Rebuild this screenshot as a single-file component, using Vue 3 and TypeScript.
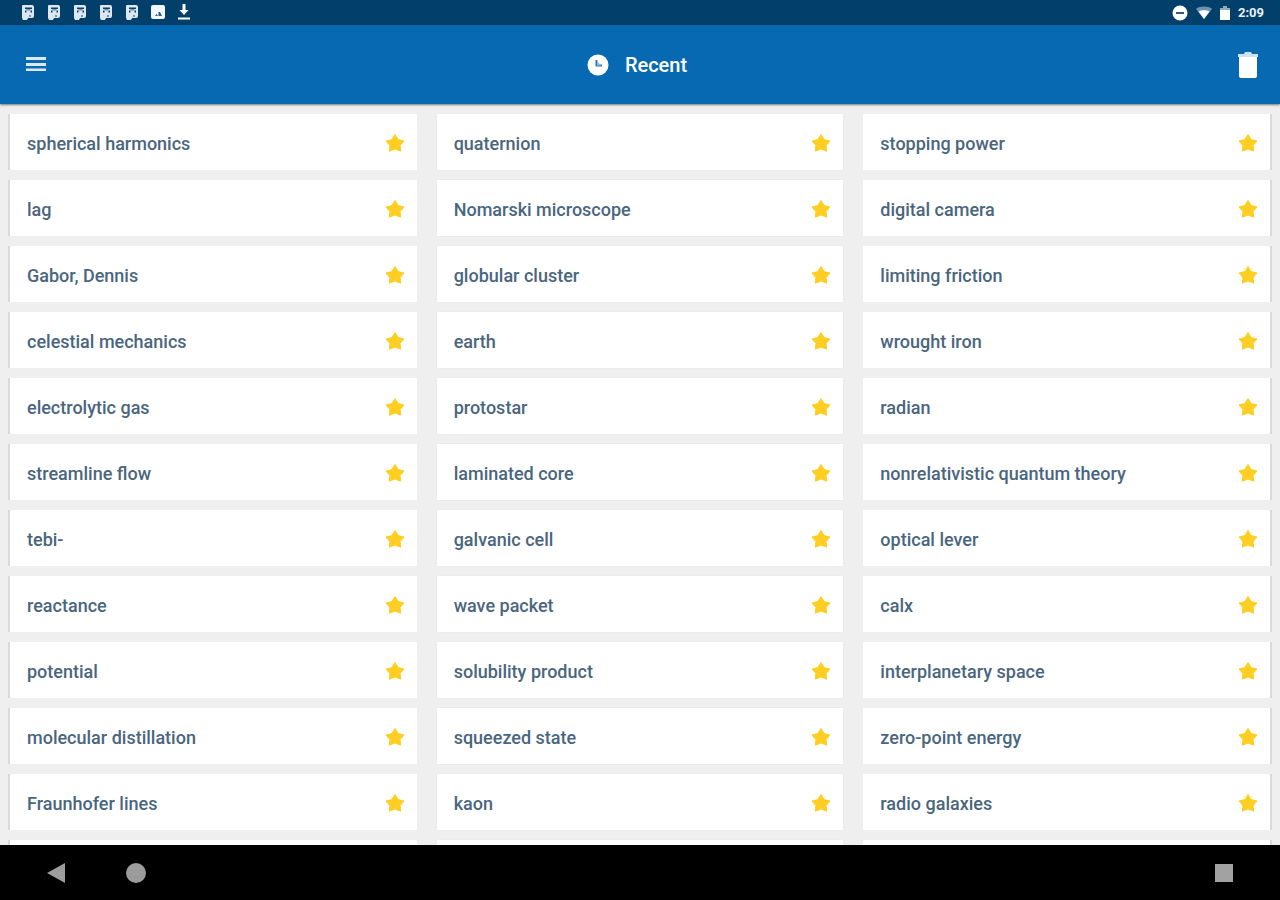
<script setup lang="ts">
import { ref } from 'vue'

interface Term {
  name: string
  starred: boolean
}

const names: string[] = [
  'spherical harmonics', 'quaternion', 'stopping power',
  'lag', 'Nomarski microscope', 'digital camera',
  'Gabor, Dennis', 'globular cluster', 'limiting friction',
  'celestial mechanics', 'earth', 'wrought iron',
  'electrolytic gas', 'protostar', 'radian',
  'streamline flow', 'laminated core', 'nonrelativistic quantum theory',
  'tebi-', 'galvanic cell', 'optical lever',
  'reactance', 'wave packet', 'calx',
  'potential', 'solubility product', 'interplanetary space',
  'molecular distillation', 'squeezed state', 'zero-point energy',
  'Fraunhofer lines', 'kaon', 'radio galaxies',
]

const terms = ref<Term[]>(names.map((name) => ({ name, starred: true })))
</script>

<template>
  <div class="screen">
    <div class="status">
      <div class="notices">
        <svg v-for="n in 5" :key="n" width="16" height="18" viewBox="0 0 16 18" aria-hidden="true">
          <path d="M3 1h9a2 2 0 0 1 2 2v9a2 2 0 0 1-2 2H8l-1 2H3l-1-2V2a1 1 0 0 1 1-1z" fill="#dbe7f1" />
          <path d="M5 3.500h7v1.500H5zM5 6.500h1.500v2H5zM10.500 6.500H12v2h-1.500zM9 11.500h2v1H9z" fill="#0d4068" />
          <path d="M6.500 5h4v1.500h-4z" fill="#6f8fab" />
        </svg>
        <svg width="16" height="18" viewBox="0 0 16 18" aria-hidden="true">
          <rect x="1" y="1" width="14" height="14" rx="2" fill="#f2f7fb" />
          <path d="M5 12l1.500-2L8 12zM8.500 12V8H10l2 4z" fill="#33597c" />
        </svg>
        <svg width="16" height="18" viewBox="0 0 16 18" aria-hidden="true">
          <path d="M6.500 0h3v6h3L8 11 3.500 6h3zM2 13.500h12v2H2z" fill="#fff" />
        </svg>
      </div>
      <div class="system">
        <svg width="16" height="16" viewBox="0 0 16 16" aria-hidden="true">
          <circle cx="8" cy="8" r="7.500" fill="#fff" />
          <rect x="4" y="7" width="8" height="2" fill="#33597c" />
        </svg>
        <svg width="16" height="16" viewBox="0 0 16 16" aria-hidden="true">
          <path d="M0 4C4 .8 12 .8 16 4L8 14z" fill="#6e91ae" />
          <path d="M2.500 6.500c3-1.800 8-1.800 11 0L8 14z" fill="#fff" />
        </svg>
        <svg width="10" height="16" viewBox="0 0 10 16" aria-hidden="true">
          <path d="M3 1h4v2h3v12H0V3h3z" fill="#8fabc0" />
          <path d="M0 5h10v10H0z" fill="#fff" />
        </svg>
        <span class="time">2:09</span>
      </div>
    </div>

    <header class="bar">
      <button class="tool" type="button" aria-label="Menu">
        <svg width="20" height="18" viewBox="0 0 20 18">
          <path d="M0 1h20v3H0zM0 7h20v3H0zM0 12.500h20v2.500H0z" fill="#dce8f8" />
        </svg>
      </button>
      <h1 class="title">
        <svg width="22" height="22" viewBox="0 0 22 22" aria-hidden="true">
          <circle cx="11" cy="11" r="10.500" fill="#fff" />
          <path d="M9.500 6v5.500H15" fill="none" stroke="#2a78b8" stroke-width="2" />
          <path d="M10 7l4 4.500h-4z" fill="#8db8dc" />
        </svg>
        <span>Recent</span>
      </h1>
      <button class="tool" type="button" aria-label="Delete all">
        <svg width="20" height="26" viewBox="0 0 20 26">
          <path d="M0 2h6l1-2h6l1 2h6v3H0z" fill="#cfe1f3" />
          <path d="M1 5h18v19a2 2 0 0 1-2 2H3a2 2 0 0 1-2-2z" fill="#fff" />
        </svg>
      </button>
    </header>

    <main class="content">
      <ul class="grid">
        <li v-for="term in terms" :key="term.name" class="card">
          <span class="name">{{ term.name }}</span>
          <button
            class="star"
            type="button"
            :aria-label="'Favourite ' + term.name"
            :aria-pressed="term.starred"
            @click="term.starred = !term.starred"
          >
            <svg width="20" height="20" viewBox="0 0 20 20">
              <path
                d="M10 1.500l3.200 5.100 5.800 1.400-3.900 4.600.6 5.600L10 16l-5.700 2.200.6-5.600L1 8l5.800-1.400z"
                :fill="term.starred ? '#ffce22' : '#d0d4d8'"
                :stroke="term.starred ? '#ffce22' : '#d0d4d8'"
                stroke-width="1"
                stroke-linejoin="round"
              />
            </svg>
          </button>
        </li>
        <li v-for="n in 3" :key="'next' + n" class="card" aria-hidden="true"></li>
      </ul>
    </main>

    <nav class="nav" aria-label="System">
      <button type="button" aria-label="Back">
        <svg width="20" height="20" viewBox="0 0 20 20"><path d="M1 10L19 0v20z" fill="#9c9c9c" /></svg>
      </button>
      <button type="button" aria-label="Home">
        <svg width="20" height="20" viewBox="0 0 20 20"><circle cx="10" cy="10" r="10" fill="#9c9c9c" /></svg>
      </button>
      <button class="last" type="button" aria-label="Overview">
        <svg width="20" height="20" viewBox="0 0 20 20"><rect x="1" y="1" width="18" height="18" fill="#a2a2a2" /></svg>
      </button>
    </nav>
  </div>
</template>

<style>
body {
  margin: 0;
}
</style>

<style scoped>
.screen {
  display: flex;
  flex-direction: column;
  height: 100vh;
  overflow: hidden;
  background: #efefef;
  font-family: Roboto, "Liberation Sans", sans-serif;
}
button {
  display: flex;
  align-items: center;
  justify-content: center;
  padding: 0;
  border: 0;
  background: none;
  cursor: pointer;
}
svg {
  display: block;
}
.status {
  flex: none;
  display: flex;
  align-items: center;
  justify-content: space-between;
  height: 25px;
  padding: 0 16px 0 20px;
  background: #033f6b;
}
.notices {
  display: flex;
  gap: 10px;
  padding-top: 1px;
}
.system {
  display: flex;
  align-items: center;
  gap: 8px;
}
.time {
  color: #e8f0f6;
  font-size: 13px;
  font-weight: 700;
  line-height: 16px;
}
.bar {
  flex: none;
  position: relative;
  z-index: 1;
  display: flex;
  align-items: center;
  justify-content: space-between;
  height: 79px;
  padding: 0 16px 0 20px;
  background: #0769b1;
  box-shadow: 0 1px 2px rgba(0, 0, 0, 0.5);
}
.tool {
  width: 32px;
  height: 40px;
}
.title {
  display: flex;
  align-items: center;
  gap: 16px;
  margin: 0;
  padding-right: 10px;
  color: #fff;
  font-size: 20px;
  font-weight: 500;
  line-height: 24px;
}
.content {
  flex: 1;
  min-height: 0;
  overflow: hidden;
}
.grid {
  display: grid;
  grid-template-columns: repeat(3, minmax(0, 1fr));
  grid-auto-rows: 56px;
  gap: 10px 20px;
  margin: 0;
  padding: 10px;
  list-style: none;
}
.card {
  box-sizing: border-box;
  display: flex;
  align-items: center;
  justify-content: space-between;
  padding: 2px 10px 0 17px;
  background: #fff;
  box-shadow: 0 0 2px rgba(0, 0, 0, 0.04);
}
.card:nth-child(3n + 1) {
  box-shadow: -2px 0 0 #d9d9d9;
}
.card:nth-child(3n) {
  box-shadow: 2px 0 0 #d9d9d9;
}
.name {
  padding-top: 1px;
  color: #4a667e;
  font-size: 18px;
  font-weight: 500;
  line-height: 24px;
}
.star {
  width: 24px;
  height: 24px;
}
.nav {
  flex: none;
  display: flex;
  align-items: center;
  height: 55px;
  padding: 0 36px;
  background: #000;
}
.nav button {
  width: 40px;
  height: 40px;
}
.nav button + button {
  margin-left: 40px;
}
.nav .last {
  margin-left: auto;
}
</style>
